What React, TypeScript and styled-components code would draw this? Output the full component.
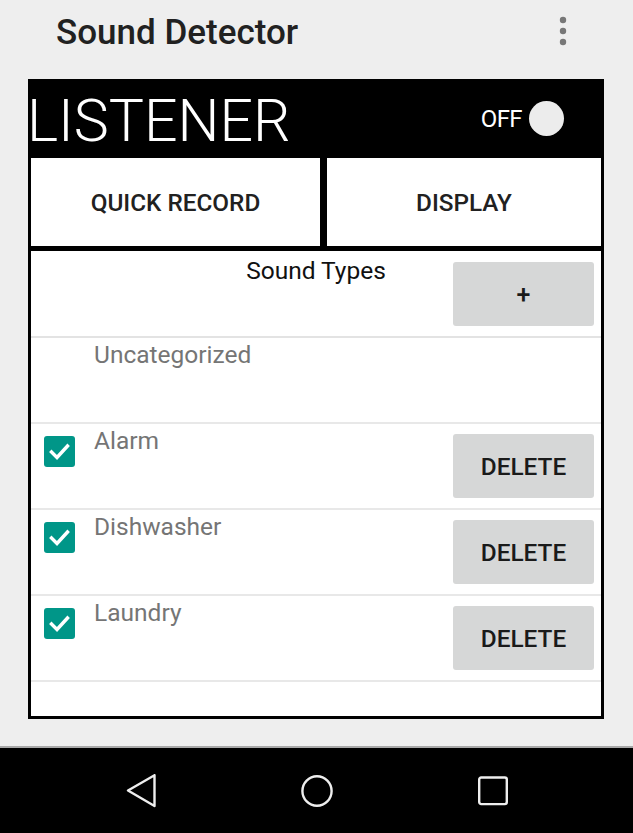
import React from "react";
import styled, { createGlobalStyle } from "styled-components";

const Global = createGlobalStyle`
  html, body { margin: 0; padding: 0; background: #eeeeee; }
  body { font-family: Roboto, "Noto Sans", "Liberation Sans", sans-serif; }
  #root { min-height: 100vh; display: flex; flex-direction: column; }
`;

const Screen = styled.div`
  flex: 1;
  display: flex;
  flex-direction: column;
  background: #eeeeee;
`;

const Toolbar = styled.div`
  height: 64px;
  display: flex;
  align-items: center;
  justify-content: space-between;
  padding: 0 66px 0 56px;
`;

const Title = styled.div`
  font-size: 35px;
  font-weight: 500;
  color: #212121;
  line-height: 1;
  margin-top: 1px;
`;

const MenuDots = styled.svg`
  width: 8px;
  height: 30px;
  margin-top: -3px;
`;

const Card = styled.div`
  margin: 15px 0 0 28px;
  width: 576px;
  height: 640px;
  box-sizing: border-box;
  background: #000;
  padding: 0 3px 3px 3px;
  display: flex;
  flex-direction: column;
`;

const Header = styled.div`
  height: 79px;
  display: flex;
  align-items: center;
  justify-content: space-between;
  padding-right: 37px;
`;

const Listener = styled.div`
  font-size: 59px;
  font-weight: 300;
  color: #fff;
  margin-left: -4px;
  line-height: 1;
  margin-top: 3px;
`;

const SwitchBox = styled.div`
  display: flex;
  align-items: center;
  gap: 7px;
`;

const SwitchLabel = styled.span`
  color: #fff;
  font-size: 24px;
  font-weight: 400;
  letter-spacing: -0.6px;
`;

const Thumb = styled.span`
  width: 35px;
  height: 35px;
  border-radius: 50%;
  background: #ececec;
`;

const ButtonRow = styled.div`
  display: grid;
  grid-template-columns: 289fr 274fr;
  column-gap: 7px;
  height: 88px;
  margin-bottom: 5px;
`;

const BigButton = styled.div`
  background: #fff;
  display: flex;
  align-items: center;
  justify-content: center;
  font-size: 24.3px;
  font-weight: 500;
  color: #212121;
`;

const List = styled.div`
  flex: 1;
  background: #fff;
  display: flex;
  flex-direction: column;
`;

const TypesHead = styled.div`
  height: 85px;
  display: grid;
  border-bottom: 2px solid #e3e3e3;
`;

const TypesTitle = styled.div`
  grid-area: 1 / 1;
  justify-self: center;
  align-self: start;
  margin-top: 6px;
  font-size: 24.5px;
  line-height: 28px;
  color: #111;
`;

const GreyButton = styled.div`
  width: 141px;
  height: 64px;
  border-radius: 3px;
  background: #d6d7d7;
  display: flex;
  align-items: center;
  justify-content: center;
  color: #1a1a1a;
  font-weight: 500;
`;

const AddButton = styled(GreyButton)`
  grid-area: 1 / 1;
  justify-self: end;
  align-self: start;
  margin: 11px 7px 0 0;
  font-size: 25px;
`;

const Row = styled.div`
  height: 84px;
  display: grid;
  grid-template-columns: 63px 1fr auto;
  border-bottom: 2px solid #e8e8e8;
`;

const CheckCell = styled.div`
  padding: 12px 0 0 13px;
`;

const Check = styled.svg`
  width: 31px;
  height: 31px;
  display: block;
`;

const Label = styled.div`
  margin-top: 3px;
  font-size: 24.5px;
  line-height: 28px;
  color: #757575;
`;

const DeleteButton = styled(GreyButton)`
  margin: 10px 7px 0 0;
  font-size: 24.4px;
`;

const NavBar = styled.div`
  margin-top: auto;
  height: 85px;
  border-top: 2px solid #a8a8a8;
  background: #000;
  display: grid;
  grid-template-columns: repeat(3, 176px);
  justify-content: center;
  align-items: center;
`;

const NavCell = styled.div`
  display: flex;
  justify-content: center;
`;

const NavIcon = styled.svg`
  width: 34px;
  height: 34px;
  display: block;
`;

const CheckBox = () => (
  <Check viewBox="0 0 31 31">
    <rect x="0" y="0" width="31" height="31" rx="3" fill="#009688" />
    <path d="M7.5 16 L13 21.5 L23.5 10" fill="none" stroke="#fff" strokeWidth="3.4" strokeLinecap="square" />
  </Check>
);

const items = ["Alarm", "Dishwasher", "Laundry"];

export default function App() {
  return (
    <>
      <Global />
      <Screen>
        <Toolbar>
          <Title>Sound Detector</Title>
          <MenuDots viewBox="0 0 8 30">
            <circle cx="4" cy="4" r="3.2" fill="#777" />
            <circle cx="4" cy="15" r="3.2" fill="#777" />
            <circle cx="4" cy="26" r="3.2" fill="#777" />
          </MenuDots>
        </Toolbar>
        <Card>
          <Header>
            <Listener>LISTENER</Listener>
            <SwitchBox>
              <SwitchLabel>OFF</SwitchLabel>
              <Thumb />
            </SwitchBox>
          </Header>
          <ButtonRow>
            <BigButton>QUICK RECORD</BigButton>
            <BigButton>DISPLAY</BigButton>
          </ButtonRow>
          <List>
            <TypesHead>
              <TypesTitle>Sound Types</TypesTitle>
              <AddButton>+</AddButton>
            </TypesHead>
            <Row>
              <div />
              <Label>Uncategorized</Label>
              <div />
            </Row>
            {items.map((name) => (
              <Row key={name}>
                <CheckCell>
                  <CheckBox />
                </CheckCell>
                <Label>{name}</Label>
                <DeleteButton>DELETE</DeleteButton>
              </Row>
            ))}
          </List>
        </Card>
        <NavBar>
          <NavCell>
            <NavIcon viewBox="0 0 34 34">
              <path d="M4 16.5 L30.5 1.2 L30.5 32 Z" fill="none" stroke="#eee" strokeWidth="2.4" strokeLinejoin="round" />
            </NavIcon>
          </NavCell>
          <NavCell>
            <NavIcon viewBox="0 0 34 34">
              <ellipse cx="17" cy="17" rx="14.6" ry="14.8" fill="none" stroke="#eee" strokeWidth="2.4" />
            </NavIcon>
          </NavCell>
          <NavCell>
            <NavIcon viewBox="0 0 34 34">
              <rect x="3.2" y="3.5" width="27.6" height="26.6" rx="2" fill="none" stroke="#eee" strokeWidth="2.4" />
            </NavIcon>
          </NavCell>
        </NavBar>
      </Screen>
    </>
  );
}
